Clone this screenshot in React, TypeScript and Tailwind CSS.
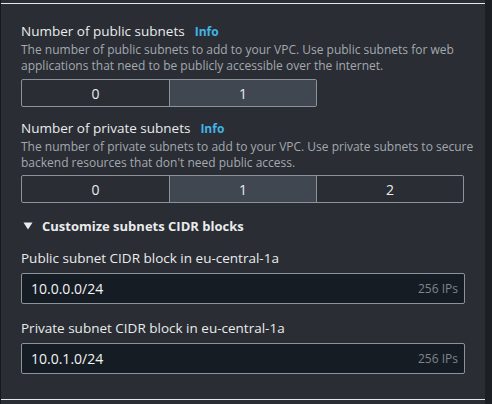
const font = { fontFamily: '"Open Sans", "Noto Sans", Arial, sans-serif' };

function Segmented({ options, selected }: { options: string[]; selected: string }) {
  return (
    <div className="flex w-fit rounded-[2px] border border-[#8c9299]">
      {options.map((opt, i) => (
        <div
          key={opt}
          className={`flex h-[26px] w-[147px] items-center justify-center text-[14px] text-[#e9ebed] ${
            i > 0 ? "border-l border-[#8c9299]" : ""
          } ${opt === selected ? "bg-[#414750]" : ""}`}
        >
          {opt}
        </div>
      ))}
    </div>
  );
}

function CidrInput({ value }: { value: string }) {
  return (
    <div className="mt-[5px] flex h-[31px] w-[444px] items-center justify-between rounded-[2px] border border-[#8c9299] bg-[#161c24] pl-[9px] pr-[6px]">
      <span className="text-[14px] text-[#f2f3f3]">{value}</span>
      <span className="text-[12px] text-[#7d848c]">256 IPs</span>
    </div>
  );
}

export default function App() {
  return (
    <div className="flex h-[404px] w-[492px] bg-[#1c1f24]" style={font}>
      <div className="w-[1px] bg-[#16191d]" />
      <div className="flex h-full w-[484px] flex-col bg-[#2a2d33] pt-[3px]">
        <div className="h-[1px] bg-[#e6e8ea]" />
        <div className="flex-1 pl-[20px] pt-[17px]">
          <div className="flex items-baseline text-[13.5px] leading-[20px] text-[#e9ebed]">
            Number of public subnets
            <span className="ml-[10px] text-[12px] font-bold text-[#42b4e6]">Info</span>
          </div>
          <p className="w-[450px] text-[12px] leading-[16px] text-[#a3a9b0]">
            The number of public subnets to add to your VPC. Use public subnets for web
            applications that need to be publicly accessible over the internet.
          </p>
          <div className="mt-[5px]">
            <Segmented options={["0", "1"]} selected="1" />
          </div>

          <div className="mt-[11px] flex items-baseline text-[13.5px] leading-[20px] text-[#e9ebed]">
            Number of private subnets
            <span className="ml-[10px] text-[12px] font-bold text-[#42b4e6]">Info</span>
          </div>
          <p className="w-[455px] text-[12px] leading-[16px] text-[#a3a9b0]">
            The number of private subnets to add to your VPC. Use private subnets to secure
            backend resources that don't need public access.
          </p>
          <div className="mt-[4px]">
            <Segmented options={["0", "1", "2"]} selected="1" />
          </div>

          <div className="mt-[13px] flex items-center text-[13px] leading-[20px] font-bold text-[#e9ebed]">
            <svg width="10" height="8" viewBox="0 0 10 8" className="ml-[2px] mr-[9px]">
              <path d="M0.5 0.5 H9.5 L5 7.5 Z" fill="#e9ebed" />
            </svg>
            Customize subnets CIDR blocks
          </div>

          <div className="mt-[12px] text-[13.5px] leading-[20px] text-[#e9ebed]">
            Public subnet CIDR block in eu-central-1a
          </div>
          <CidrInput value="10.0.0.0/24" />

          <div className="mt-[14px] text-[13.5px] leading-[20px] text-[#e9ebed]">
            Private subnet CIDR block in eu-central-1a
          </div>
          <CidrInput value="10.0.1.0/24" />
        </div>
        <div className="mb-[4px] h-[1px] bg-[#e6e8ea]" />
      </div>
      <div className="flex-1 bg-[#1c1f24]" />
    </div>
  );
}
